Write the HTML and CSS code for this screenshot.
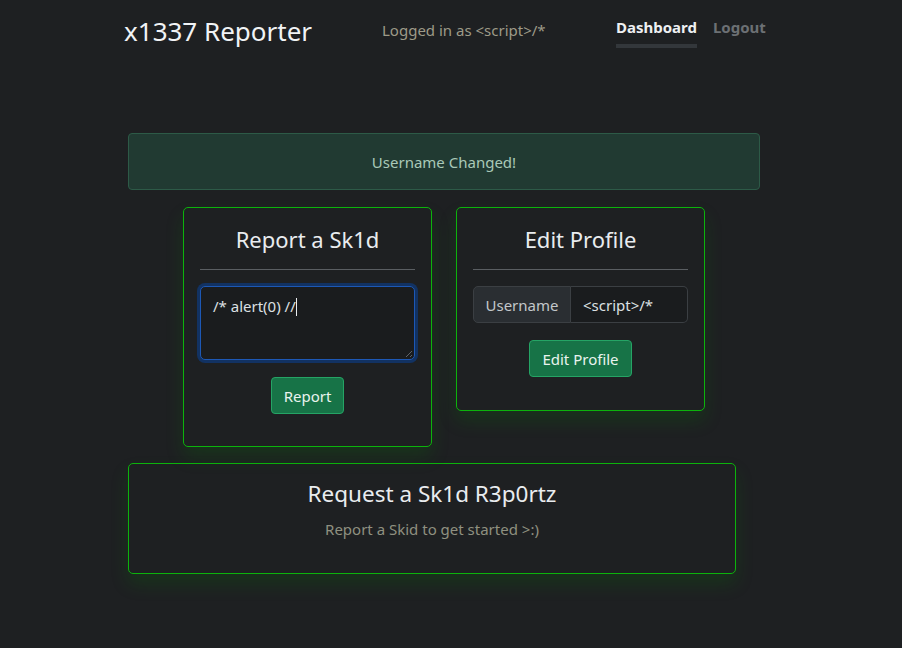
FILE: index.html
```html
<!DOCTYPE html>
<html>
<head>
<meta charset="utf-8">
<link rel="stylesheet" href="styles.css">
</head>
<body>
<header class="topbar">
  <div class="brand">x1337 Reporter</div>
  <div class="logged">Logged in as &lt;script&gt;/*</div>
  <nav class="nav">
    <a class="nav-link active">Dashboard</a>
    <a class="nav-link">Logout</a>
  </nav>
</header>
<main class="main">
  <div class="alert">Username Changed!</div>
  <div class="row">
    <section class="card card-report">
      <h3 class="card-title">Report a Sk1d</h3>
      <hr class="divider">
      <div class="textarea">/* alert(0) //<span class="caret"></span><span class="grip"></span></div>
      <div class="btn-wrap"><button class="btn">Report</button></div>
    </section>
    <section class="card card-edit">
      <h3 class="card-title">Edit Profile</h3>
      <hr class="divider">
      <div class="input-group">
        <span class="ig-label">Username</span>
        <span class="ig-input">&lt;script&gt;/*</span>
      </div>
      <div class="btn-wrap"><button class="btn">Edit Profile</button></div>
    </section>
  </div>
  <section class="card card-request">
    <h3 class="req-title">Request a Sk1d R3p0rtz</h3>
    <p class="req-sub">Report a Skid to get started &gt;:)</p>
  </section>
</main>
</body>
</html>
```
FILE: styles.css
```css
* { box-sizing: border-box; }
html, body { margin: 0; padding: 0; }
body {
  background: #1e2022;
  color: #dee2e6;
  font-family: "Noto Sans", "DejaVu Sans", sans-serif;
  width: 902px;
  height: 648px;
  overflow: hidden;
}
.topbar {
  display: flex;
  align-items: center;
  height: 62px;
  padding-left: 124px;
}
.brand {
  font-size: 26px;
  color: #f1f3f5;
  width: 258px;
  line-height: 1;
  margin-top: -1px;
}
.logged {
  font-size: 15px;
  color: #9d9a88;
  width: 234px;
  margin-top: -2px;
}
.nav { display: flex; gap: 16px; margin-top: 3px; }
.nav-link {
  font-size: 15px;
  font-weight: 700;
  color: #6c7074;
  padding-bottom: 7px;
  border-bottom: 4px solid transparent;
}
.nav-link.active { color: #eef0f2; border-bottom-color: #33373b; }
.main { padding-left: 128px; padding-top: 71px; }
.alert {
  width: 632px;
  height: 57px;
  background: #213a32;
  border: 1px solid #2d5a47;
  border-radius: 4px;
  color: #a9c9b8;
  font-size: 15px;
  display: flex;
  align-items: center;
  justify-content: center;
  padding-top: 1px;
}
.row {
  display: flex;
  gap: 24px;
  margin-top: 17px;
  margin-left: 55px;
  align-items: flex-start;
}
.card {
  border: 1px solid #0cb30c;
  border-radius: 5px;
  background: #1e2022;
  box-shadow: 0 10px 18px rgba(0, 130, 0, 0.2);
}
.card-report { width: 249px; height: 240px; padding: 0 16px; }
.card-edit { width: 249px; height: 204px; padding: 0 16px; }
.card-title {
  margin: 0;
  font-weight: 400;
  font-size: 22px;
  text-align: center;
  color: #e9ecef;
  padding-top: 16px;
  line-height: 30px;
}
.divider {
  border: 0;
  border-top: 1px solid #5a5e62;
  margin: 15px 0 16px 0;
}
.textarea {
  position: relative;
  height: 74px;
  background: #1a1c1e;
  border: 1px solid #1d58b5;
  border-radius: 5px;
  box-shadow: 0 0 0 3px #123262;
  padding: 8px 12px;
  font-size: 15px;
  color: #dde0e3;
  line-height: 22px;
}
.caret {
  display: inline-block;
  width: 1px;
  height: 18px;
  background: #e9ecef;
  vertical-align: -4px;
}
.grip {
  position: absolute;
  right: 2px;
  bottom: 2px;
  width: 9px;
  height: 9px;
  background: repeating-linear-gradient(135deg, transparent 0 2px, #5f6368 2px 3px);
  clip-path: polygon(100% 0, 100% 100%, 0 100%);
}
.btn-wrap { display: flex; justify-content: center; margin-top: 17px; }
.btn {
  font-family: inherit;
  font-size: 15px;
  color: #e9f3ee;
  background: #177347;
  border: 1px solid #25a465;
  border-radius: 4px;
  padding: 0 12px;
  height: 37px;
}
.input-group {
  display: flex;
  height: 37px;
  font-size: 15px;
}
.ig-label {
  width: 98px;
  background: #2a2e32;
  border: 1px solid #3b3f43;
  border-radius: 5px 0 0 5px;
  display: flex;
  align-items: center;
  justify-content: center;
  color: #c3c7ca;
}
.ig-input {
  flex: 1;
  background: #1a1c1e;
  border: 1px solid #3b3f43;
  border-left: 0;
  border-radius: 0 5px 5px 0;
  display: flex;
  align-items: center;
  padding-left: 12px;
  color: #dde0e3;
}
.card-request {
  width: 608px;
  height: 111px;
  margin-top: 16px;
  text-align: center;
}
.req-title {
  margin: 0;
  font-weight: 400;
  font-size: 22.5px;
  color: #e9ecef;
  padding-top: 15px;
  line-height: 30px;
}
.req-sub {
  margin: 10px 0 0;
  font-size: 15px;
  color: #8f9080;
}
```
